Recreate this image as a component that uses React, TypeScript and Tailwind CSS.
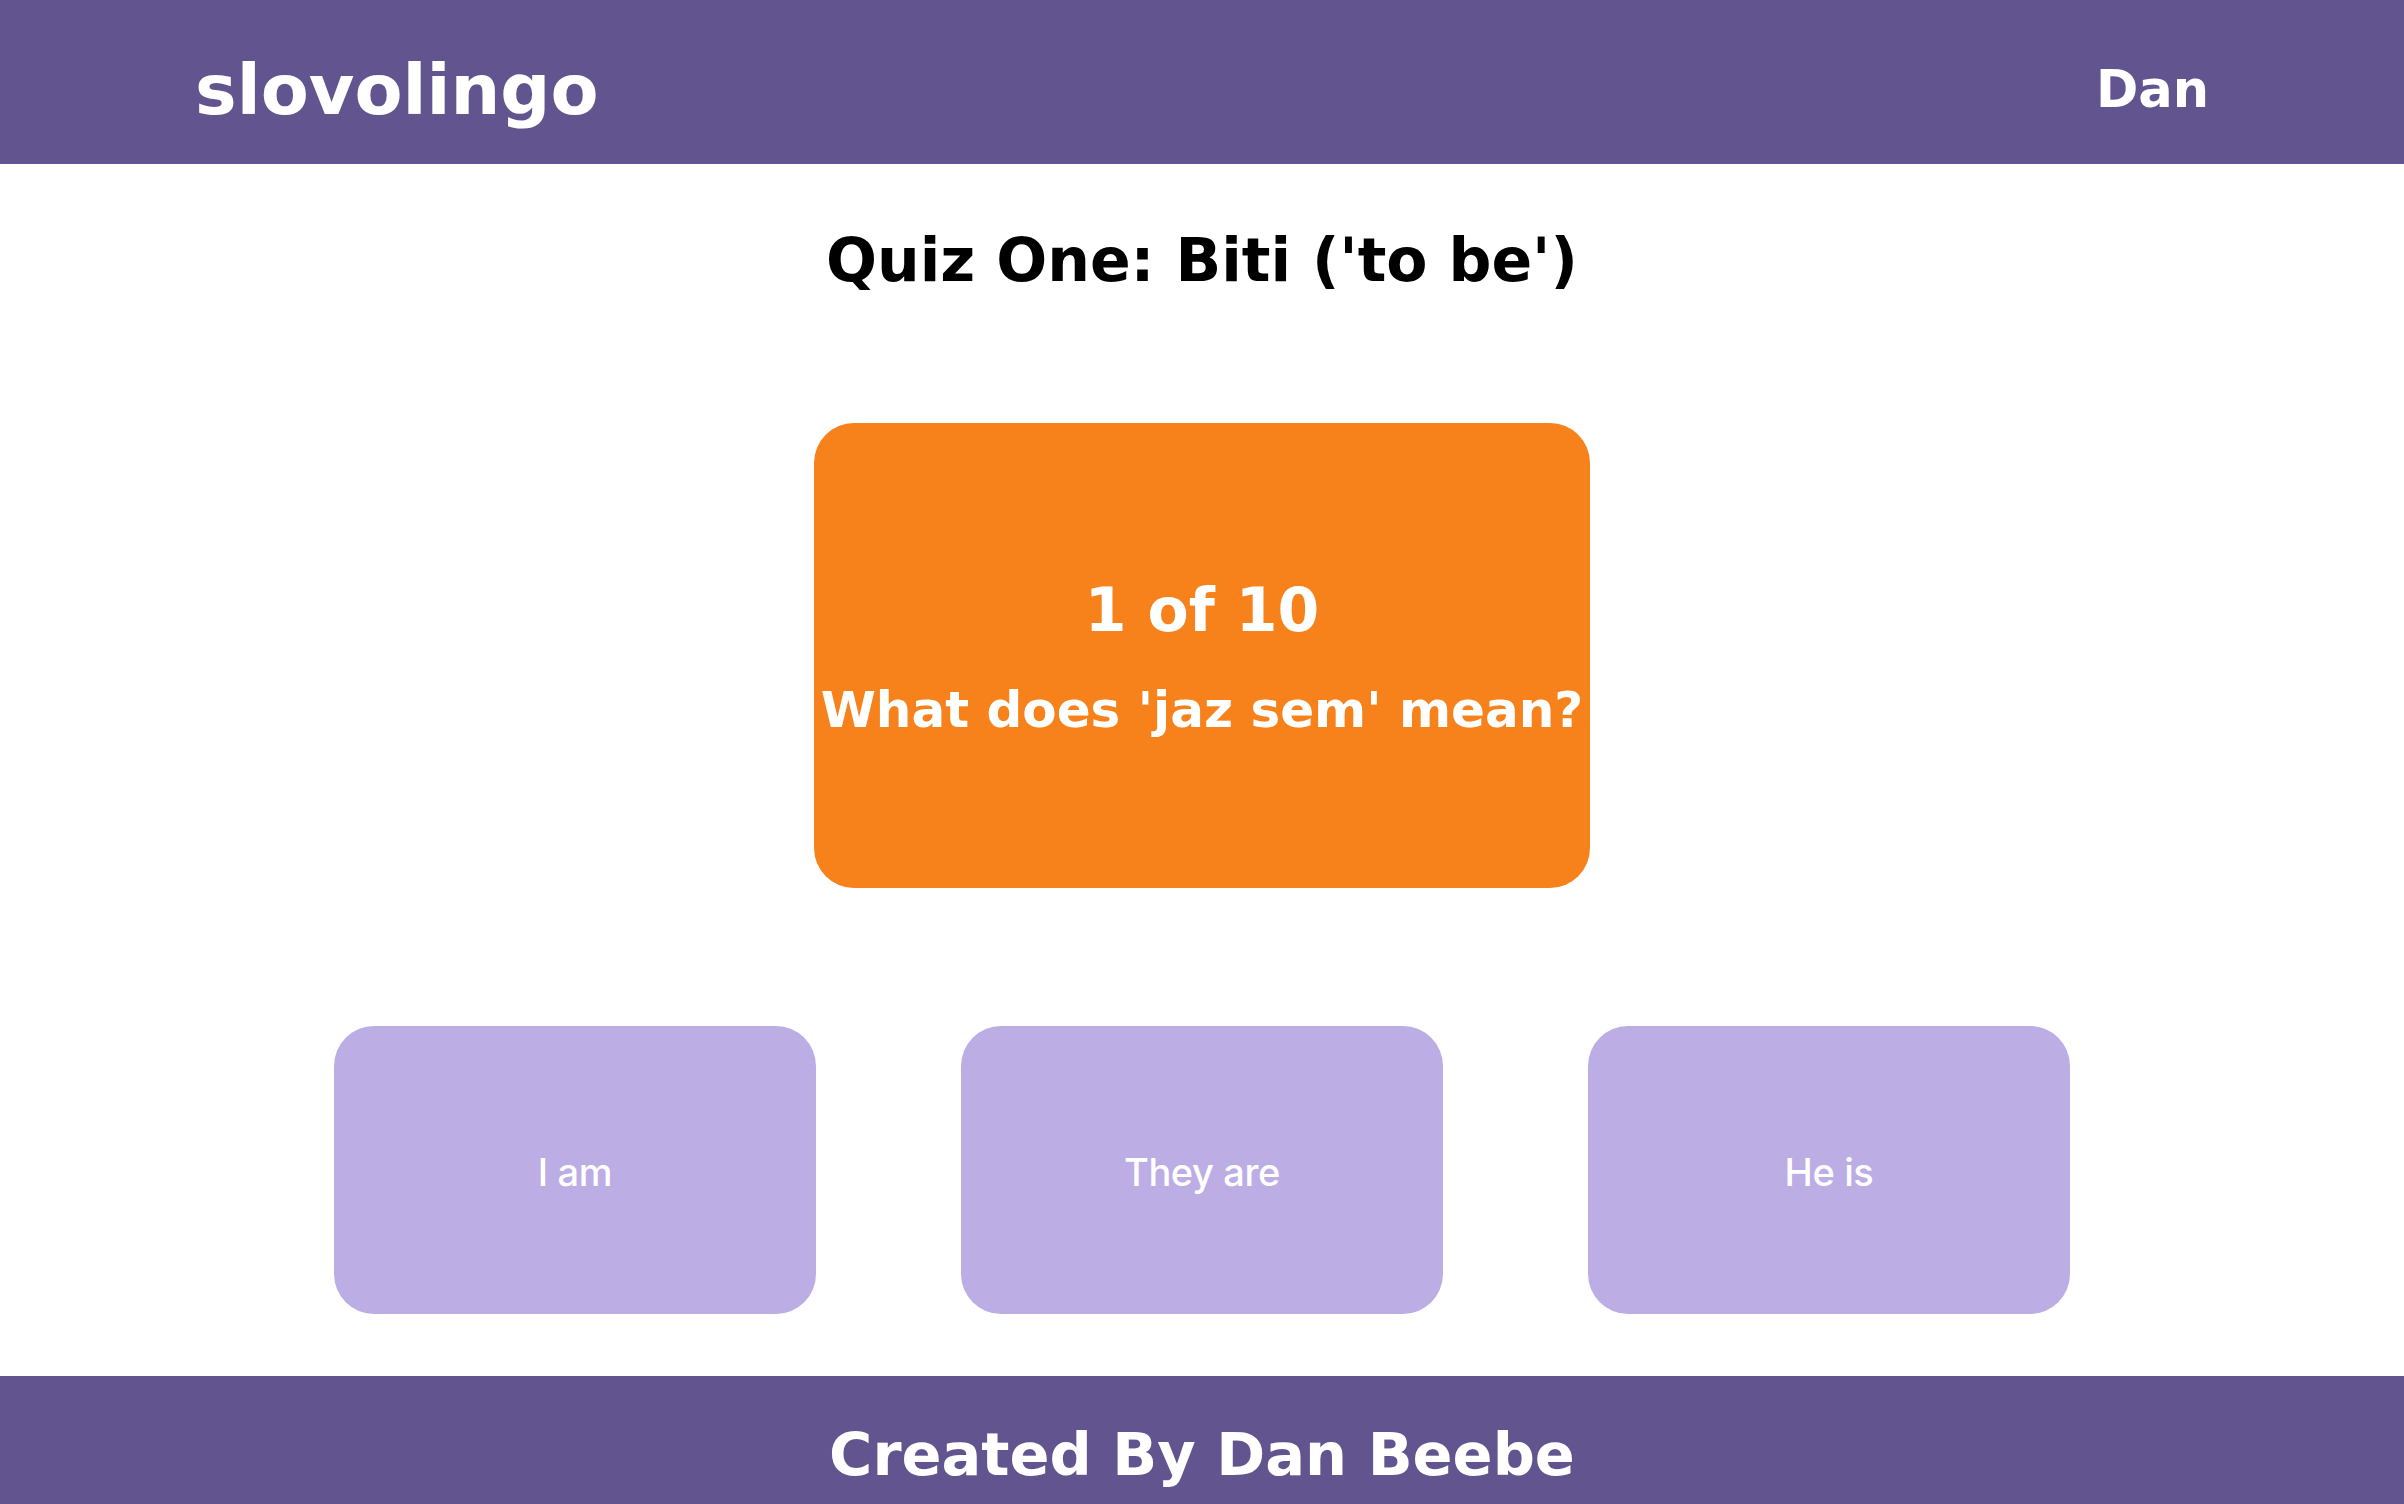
const answers = ["I am", "They are", "He is"];

export default function App() {
  return (
    <div className="flex h-screen w-full flex-col overflow-hidden bg-white font-['DejaVu_Sans',Verdana,sans-serif] leading-[normal]">
      {/* Header */}
      <header className="flex h-[164px] shrink-0 items-center justify-between bg-[#62558f] px-[195px] pt-[15px] text-white">
        <h1 className="text-[70px] font-bold leading-[normal]">slovolingo</h1>
        <span className="text-[51px] font-bold leading-[normal]">Dan</span>
      </header>

      <main className="flex flex-1 flex-col items-center">
        <h2 className="mt-[61px] text-[60px] font-bold leading-[normal] text-black">Quiz One: Biti ('to be')</h2>

        {/* Question card */}
        <div className="mt-[128px] flex h-[465px] w-[776px] flex-col items-center justify-center gap-[36px] rounded-[40px] bg-[#f7811a] pt-[2px] text-white">
          <h3 className="text-[60px] font-bold leading-[normal]">1 of 10</h3>
          <p className="whitespace-nowrap text-[50px] font-bold leading-[normal]">What does 'jaz sem' mean?</p>
        </div>

        {/* Answer options */}
        <div className="mt-[138px] flex gap-[145px]">
          {answers.map((a) => (
            <button
              key={a}
              className="flex h-[288px] w-[482px] items-center justify-center rounded-[40px] bg-[#bcaee5] pt-[4px] font-['Inter',sans-serif] text-[38px] font-medium leading-[normal] tracking-[-0.01em] text-white"
            >
              {a}
            </button>
          ))}
        </div>
      </main>

      {/* Footer */}
      <footer className="h-[128px] shrink-0 bg-[#62558f] pt-[44px] text-center text-white">
        <p className="text-[59px] font-bold leading-[normal]">Created By Dan Beebe</p>
      </footer>
    </div>
  );
}
